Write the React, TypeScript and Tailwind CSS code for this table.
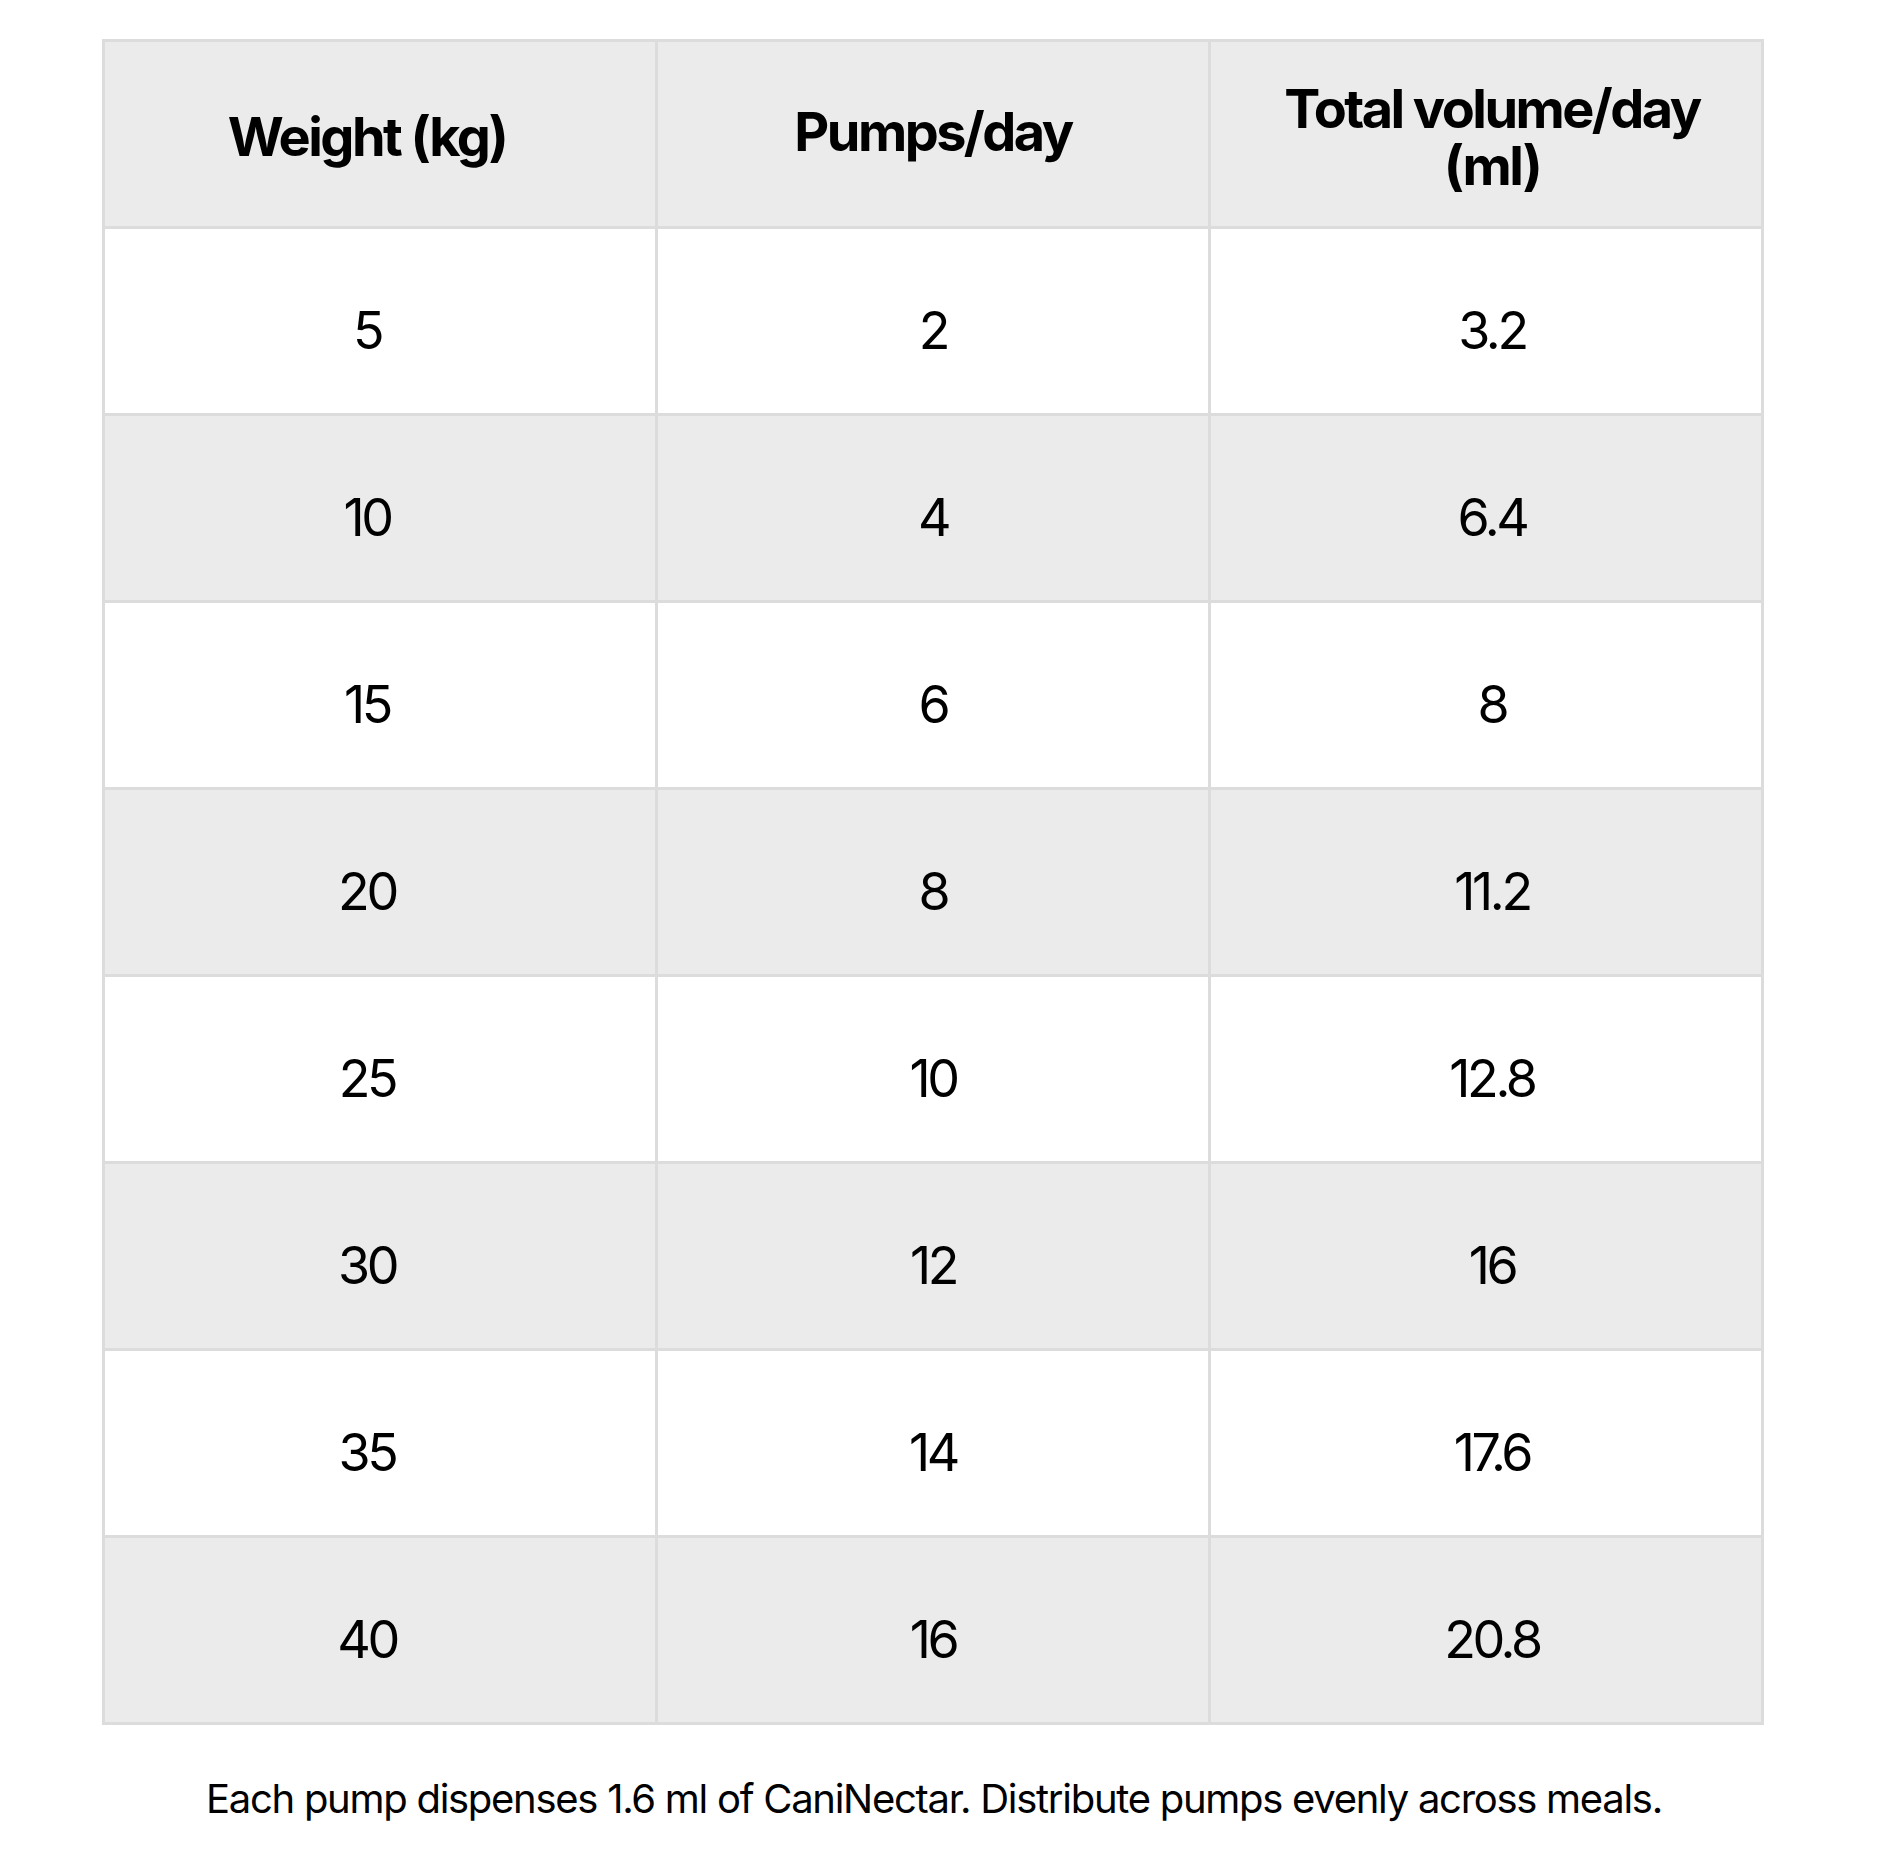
import React from "react";

const rows: [string, string, string][] = [
  ["5", "2", "3.2"],
  ["10", "4", "6.4"],
  ["15", "6", "8"],
  ["20", "8", "11.2"],
  ["25", "10", "12.8"],
  ["30", "12", "16"],
  ["35", "14", "17.6"],
  ["40", "16", "20.8"],
];

export default function App() {
  return (
    <div
      className="min-h-[1862px] w-[1878px] bg-white text-black"
      style={{ fontFamily: "Inter, 'Noto Sans', sans-serif" }}
    >
      <div className="pt-[39px]">
        <div className="ml-[102px] grid w-[1662px] grid-cols-3 gap-[3px] bg-[#dcdcdc] p-[3px]">
          <div className="flex h-[184px] items-center justify-center bg-[#ebebeb] pr-[26px] pt-[6px] text-center text-[54px] font-bold leading-[56px] tracking-[-0.047em]">
            Weight (kg)
          </div>
          <div className="flex h-[184px] items-center justify-center bg-[#ebebeb] pb-[4px] text-center text-[54px] font-bold leading-[56px] tracking-[-0.047em]">
            Pumps/day
          </div>
          <div className="flex h-[184px] items-center justify-center bg-[#ebebeb] pl-[12px] pt-[6px] text-center text-[54px] font-bold leading-[57px] tracking-[-0.047em]">
            Total volume/day
            <br />
            (ml)
          </div>
          {rows.map((r, i) => {
            const bg = i % 2 === 0 ? "bg-white" : "bg-[#ebebeb]";
            return (
              <React.Fragment key={i}>
                <div
                  className={`flex h-[184px] items-center justify-center ${bg} pr-[26px] pt-[20px] text-[52px] font-normal tracking-[-0.065em]`}
                >
                  {r[0]}
                </div>
                <div
                  className={`flex h-[184px] items-center justify-center ${bg} pt-[20px] text-[52px] font-normal tracking-[-0.065em]`}
                >
                  {r[1]}
                </div>
                <div
                  className={`flex h-[184px] items-center justify-center ${bg} pl-[12px] pt-[20px] text-[52px] font-normal tracking-[-0.065em]`}
                >
                  {r[2]}
                </div>
              </React.Fragment>
            );
          })}
        </div>
        <p className="mt-[44px] pr-[10px] text-center text-[40px] tracking-[-0.032em]">
          Each pump dispenses 1.6 ml of CaniNectar. Distribute pumps evenly across meals.
        </p>
      </div>
    </div>
  );
}
